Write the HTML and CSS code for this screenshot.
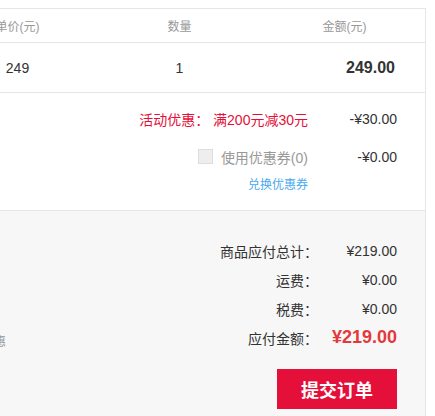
FILE: index.html
```html
<!DOCTYPE html>
<html lang="zh-CN">
<head>
    <meta charset="UTF-8">
    <meta name="viewport" content="width=device-width, initial-scale=1.0">
    <title>确认订单</title>
    <link rel="stylesheet" href="styles.css">
</head>
<body>
    <div class="order">
        <div class="order-head">
            <div class="col-price">单价(元)</div>
            <div class="col-qty">数量</div>
            <div class="col-sum">金额(元)</div>
        </div>

        <div class="order-item">
            <div class="col-price">249</div>
            <div class="col-qty">1</div>
            <div class="col-sum item-sum">249.00</div>
        </div>

        <div class="discounts">
            <div class="line promo">
                <span class="label">活动优惠： 满200元减30元</span>
                <span class="value">-¥30.00</span>
            </div>
            <div class="line coupon">
                <label class="label"><span class="check"></span>使用优惠券(0)</label>
                <span class="value">-¥0.00</span>
            </div>
            <div class="line">
                <a class="label exchange" href="#">兑换优惠券</a>
                <span class="value"></span>
            </div>
        </div>

        <div class="summary">
            <div class="note">使用优惠</div>
            <div class="totals">
                <div class="row">
                    <span class="label">商品应付总计：</span>
                    <span class="value">¥219.00</span>
                </div>
                <div class="row">
                    <span class="label">运费：</span>
                    <span class="value">¥0.00</span>
                </div>
                <div class="row">
                    <span class="label">税费：</span>
                    <span class="value">¥0.00</span>
                </div>
                <div class="row pay">
                    <span class="label">应付金额：</span>
                    <span class="value">¥219.00</span>
                </div>
                <button class="submit">提交订单</button>
            </div>
        </div>
    </div>
</body>
</html>
```

FILE: styles.css
```css
body {
    font-family: Arial, "Liberation Sans", "Noto Sans CJK SC", sans-serif;
    margin: 0;
    background: white;
    color: #333;
    overflow: hidden;
}
.order {
    width: 486px;
    margin: 8px 0 0 -60px;
    border: 1px solid #e6e6e6;
    border-bottom: none;
    box-sizing: border-box;
}
.order-head,
.order-item {
    display: grid;
    grid-template-columns: 153px 173px 1fr;
    align-items: center;
    border-bottom: 1px solid #e6e6e6;
}
.order-head {
    height: 33px;
    font-size: 12px;
    color: #999;
}
.order-item {
    height: 49px;
    font-size: 14px;
}
.col-price,
.col-qty,
.col-sum {
    text-align: center;
}
.col-qty {
    padding-right: 2px;
}
.order-head .col-sum {
    padding-right: 3px;
}
.item-sum {
    text-align: right;
    padding-right: 30px;
    font-size: 16px;
    font-weight: bold;
}
.discounts {
    padding: 16px 28px 17px 0;
    border-bottom: 1px solid #e6e6e6;
    font-size: 14px;
}
.line {
    display: flex;
    justify-content: flex-end;
    align-items: center;
    height: 19px;
}
.line + .line {
    margin-top: 19px;
}
.line:last-child {
    margin-top: 8px;
}
.line .value {
    width: 89px;
    text-align: right;
}
.promo .label {
    color: #e4103a;
}
.coupon .label {
    display: flex;
    align-items: center;
    color: #999;
}
.check {
    width: 13px;
    height: 13px;
    margin-right: 8px;
    background: #eee;
    border: 1px solid #ddd;
}
.exchange {
    font-size: 12px;
    color: #49a9ee;
    text-decoration: none;
}
.summary {
    display: flex;
    justify-content: space-between;
    background: #f7f7f7;
    padding: 25px 28px 20px 0;
    font-size: 14px;
}
.note {
    align-self: flex-start;
    margin: 96px 0 0 17px;
    color: #999;
    font-size: 12px;
}
.totals {
    display: flex;
    flex-direction: column;
    align-items: flex-end;
}
.row {
    display: flex;
    align-items: center;
    height: 29px;
}
.row .value {
    width: 79px;
    text-align: right;
}
.pay .value {
    color: #e4393c;
    font-size: 18px;
    font-weight: bold;
}
.submit {
    margin-top: 17px;
    width: 120px;
    height: 40px;
    border: none;
    background: #e4103a;
    color: white;
    font-family: "Noto Sans CJK SC", sans-serif;
    font-size: 18px;
    font-weight: bold;
    cursor: pointer;
}
```
